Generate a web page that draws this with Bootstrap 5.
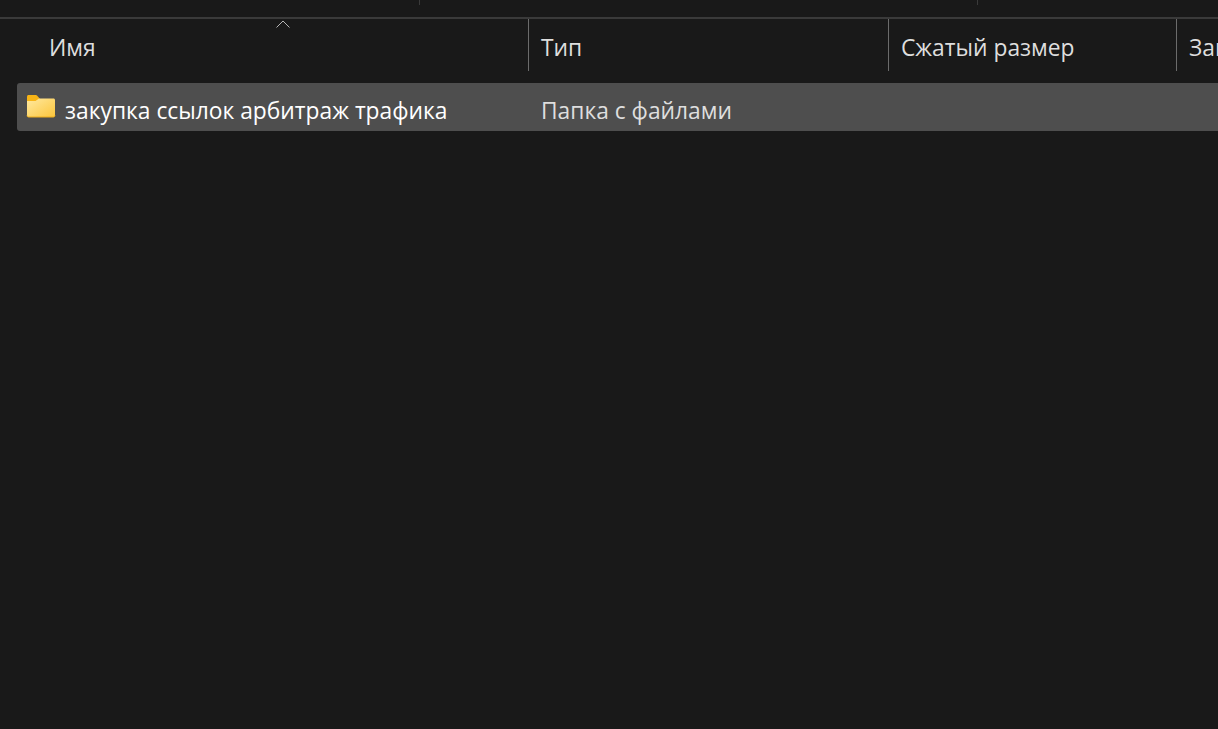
<!DOCTYPE html>
<html lang="ru">
<head>
  <meta charset="UTF-8" />
  <meta name="viewport" content="width=device-width, initial-scale=1" />
  <title>Проводник</title>
  <link href="https://cdn.jsdelivr.net/npm/bootstrap@5.3.0/dist/css/bootstrap.min.css" rel="stylesheet" />
  <style>
    html, body { height: 100%; }
    body { background: #191919; color: #dedede; font-family: "Open Sans", "Noto Sans", sans-serif; font-size: 22.8px; overflow: hidden; }
    .top-strip { height: 19px; border-bottom: 2px solid #3a3a3a; }
    .top-strip i { display: block; width: 1px; height: 5px; background: #3a3a3a; }
    .tick-a { margin-left: 419px; }
    .tick-b { margin-left: 557px; }
    .head { height: 52px; }
    .head > div { border-right: 1px solid #6b6b6b; line-height: 58px; white-space: nowrap; overflow: hidden; }
    .head > div:last-child { border-right: 0; }
    .col-name { width: 529px; padding-left: 49px; }
    .col-type { width: 360px; padding-left: 12px; }
    .col-size { width: 288px; padding-left: 12px; }
    .col-date { flex: 1; padding-left: 12px; }
    .sort-arrow { position: absolute; left: 276px; top: 20px; }
    .file-row { height: 48px; margin-top: 12px; margin-left: 17px; background: #4e4e4e; border-radius: 3px 0 0 3px; line-height: 55px; white-space: nowrap; }
    .file-row .name { width: 512px; padding-left: 9px; color: #fff; }
    .file-row .type { padding-left: 12px; color: #dedede; }
    .file-icon { position: absolute; left: 26px; top: 94px; }
    .file-row .name span { padding-left: 39px; }
  </style>
</head>
<body>
  <div class="top-strip d-flex">
    <i class="tick-a"></i>
    <i class="tick-b"></i>
  </div>
  <div class="head d-flex position-relative">
    <div class="col-name">Имя</div>
    <div class="col-type">Тип</div>
    <div class="col-size">Сжатый размер</div>
    <div class="col-date">Зап</div>
  </div>
  <svg class="sort-arrow" width="14" height="8" viewBox="0 0 14 8" fill="none" stroke="#b5b5b5" stroke-width="1"><path d="M0.5 7.500 7 1l6.500 6.500"/></svg>
  <div class="file-row d-flex">
    <div class="name"><span>закупка ссылок арбитраж трафика</span></div>
    <div class="type">Папка с файлами</div>
  </div>
  <svg class="file-icon" width="30" height="24" viewBox="0 0 30 24">
    <defs>
      <linearGradient id="folderFill" x1="0" y1="0" x2="1" y2="1">
        <stop offset="0" stop-color="#ffe9a0"/>
        <stop offset="1" stop-color="#fcc63c"/>
      </linearGradient>
    </defs>
    <path d="M1 2.500C1 1.700 1.700 1 2.500 1h7.300c.5 0 .9.2 1.200.5L14 5v3H1z" fill="#f7b416"/>
    <path d="M1 7H9.500L13 4.500H27.500C28.300 4.500 29 5.200 29 6V21.500C29 22.300 28.300 23 27.500 23H2.500C1.700 23 1 22.300 1 21.500z" fill="url(#folderFill)"/>
    <path d="M1 21.500C1 22.300 1.700 23 2.500 23H27.500C28.300 23 29 22.300 29 21.500" fill="none" stroke="#efae1d" stroke-width="1"/>
  </svg>
  <script src="https://cdn.jsdelivr.net/npm/bootstrap@5.3.0/dist/js/bootstrap.bundle.min.js"></script>
</body>
</html>
